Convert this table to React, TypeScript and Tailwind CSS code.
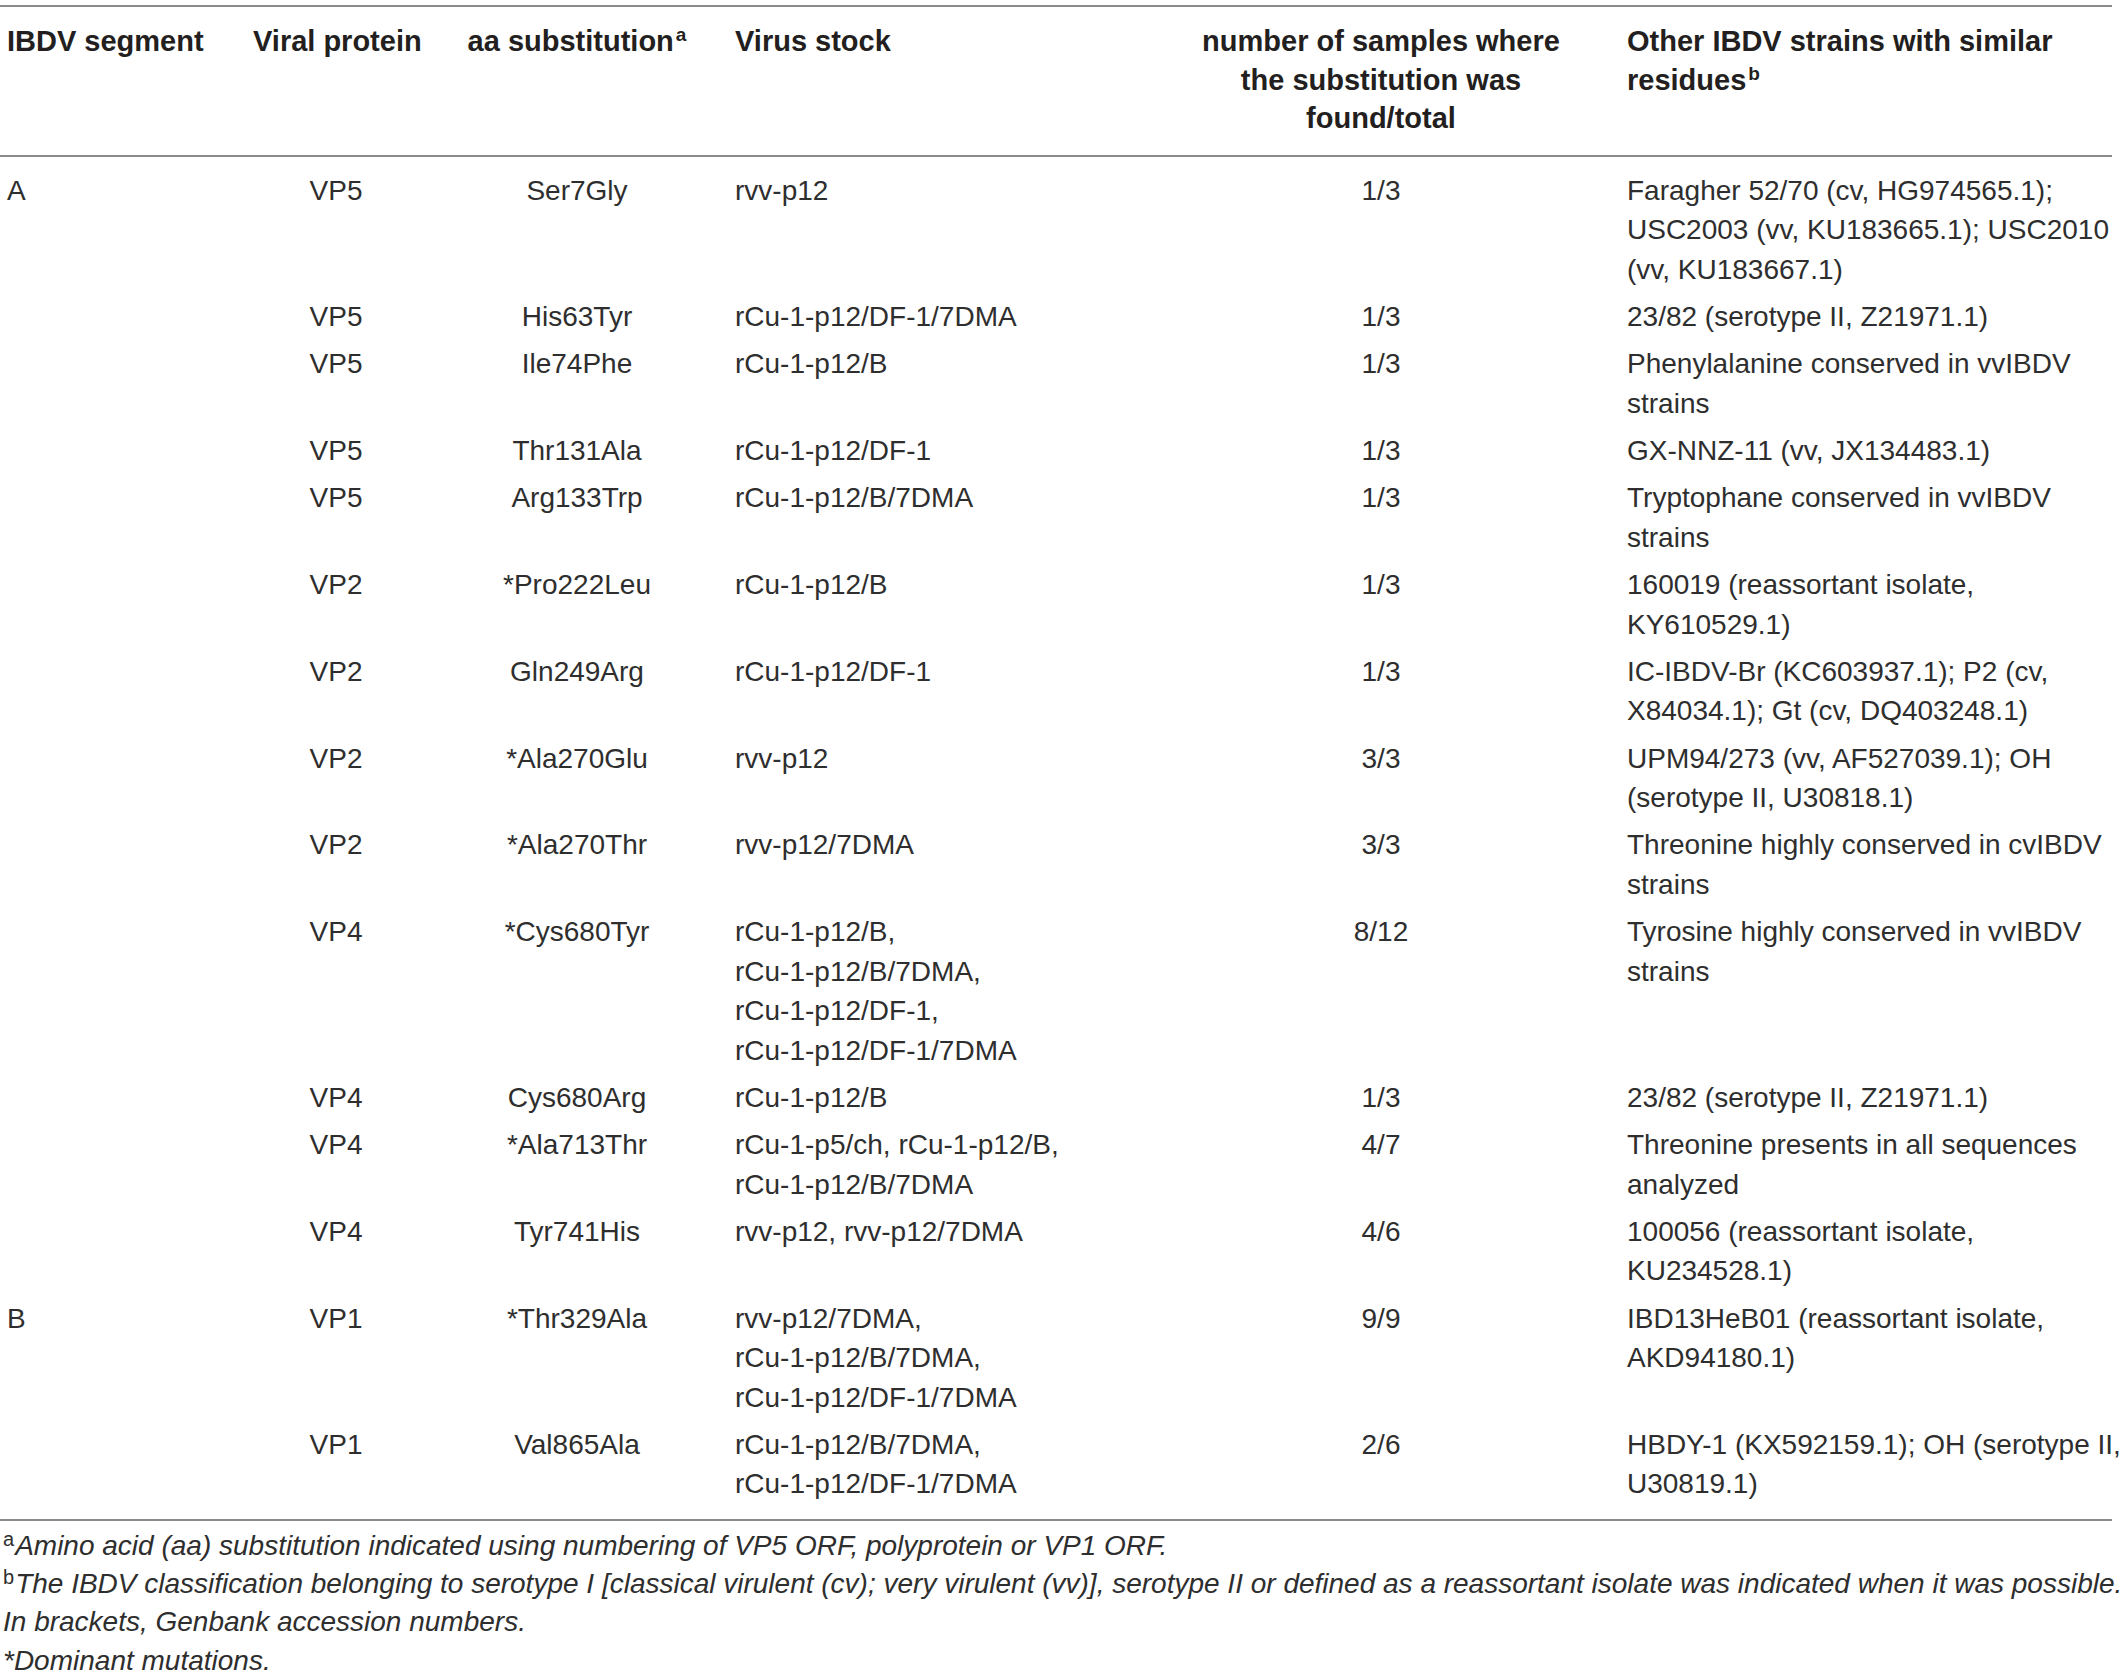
import React from 'react';

type Row = {
  segment?: string;
  protein: string;
  substitution: string;
  stock: string[];
  samples: string;
  others: string[];
};

const rows: Row[] = [
  {
    segment: 'A',
    protein: 'VP5',
    substitution: 'Ser7Gly',
    stock: ['rvv-p12'],
    samples: '1/3',
    others: ['Faragher 52/70 (cv, HG974565.1);', 'USC2003 (vv, KU183665.1); USC2010', '(vv, KU183667.1)'],
  },
  { protein: 'VP5', substitution: 'His63Tyr', stock: ['rCu-1-p12/DF-1/7DMA'], samples: '1/3', others: ['23/82 (serotype II, Z21971.1)'] },
  { protein: 'VP5', substitution: 'Ile74Phe', stock: ['rCu-1-p12/B'], samples: '1/3', others: ['Phenylalanine conserved in vvIBDV', 'strains'] },
  { protein: 'VP5', substitution: 'Thr131Ala', stock: ['rCu-1-p12/DF-1'], samples: '1/3', others: ['GX-NNZ-11 (vv, JX134483.1)'] },
  { protein: 'VP5', substitution: 'Arg133Trp', stock: ['rCu-1-p12/B/7DMA'], samples: '1/3', others: ['Tryptophane conserved in vvIBDV', 'strains'] },
  { protein: 'VP2', substitution: '*Pro222Leu', stock: ['rCu-1-p12/B'], samples: '1/3', others: ['160019 (reassortant isolate,', 'KY610529.1)'] },
  {
    protein: 'VP2',
    substitution: 'Gln249Arg',
    stock: ['rCu-1-p12/DF-1'],
    samples: '1/3',
    others: ['IC-IBDV-Br (KC603937.1); P2 (cv,', 'X84034.1); Gt (cv, DQ403248.1)'],
  },
  {
    protein: 'VP2',
    substitution: '*Ala270Glu',
    stock: ['rvv-p12'],
    samples: '3/3',
    others: ['UPM94/273 (vv, AF527039.1); OH', '(serotype II, U30818.1)'],
  },
  { protein: 'VP2', substitution: '*Ala270Thr', stock: ['rvv-p12/7DMA'], samples: '3/3', others: ['Threonine highly conserved in cvIBDV', 'strains'] },
  {
    protein: 'VP4',
    substitution: '*Cys680Tyr',
    stock: ['rCu-1-p12/B,', 'rCu-1-p12/B/7DMA,', 'rCu-1-p12/DF-1,', 'rCu-1-p12/DF-1/7DMA'],
    samples: '8/12',
    others: ['Tyrosine highly conserved in vvIBDV', 'strains'],
  },
  { protein: 'VP4', substitution: 'Cys680Arg', stock: ['rCu-1-p12/B'], samples: '1/3', others: ['23/82 (serotype II, Z21971.1)'] },
  {
    protein: 'VP4',
    substitution: '*Ala713Thr',
    stock: ['rCu-1-p5/ch, rCu-1-p12/B,', 'rCu-1-p12/B/7DMA'],
    samples: '4/7',
    others: ['Threonine presents in all sequences', 'analyzed'],
  },
  {
    protein: 'VP4',
    substitution: 'Tyr741His',
    stock: ['rvv-p12, rvv-p12/7DMA'],
    samples: '4/6',
    others: ['100056 (reassortant isolate,', 'KU234528.1)'],
  },
  {
    segment: 'B',
    protein: 'VP1',
    substitution: '*Thr329Ala',
    stock: ['rvv-p12/7DMA,', 'rCu-1-p12/B/7DMA,', 'rCu-1-p12/DF-1/7DMA'],
    samples: '9/9',
    others: ['IBD13HeB01 (reassortant isolate,', 'AKD94180.1)'],
  },
  {
    protein: 'VP1',
    substitution: 'Val865Ala',
    stock: ['rCu-1-p12/B/7DMA,', 'rCu-1-p12/DF-1/7DMA'],
    samples: '2/6',
    others: ['HBDY-1 (KX592159.1); OH (serotype II,', 'U30819.1)'],
  },
];

const Lines: React.FC<{ lines: string[] }> = ({ lines }) => (
  <>
    {lines.map((l, i) => (
      <div key={i} className="whitespace-nowrap">
        {l}
      </div>
    ))}
  </>
);

const App: React.FC = () => {
  return (
    <div className="bg-white w-[2123px] min-h-[1677px] pt-[5px] text-[#231f20] font-['Liberation_Sans',Arial,sans-serif]">
      <table className="table-fixed border-collapse w-[2112px] text-left">
        <colgroup>
          <col className="w-[246px]" />
          <col className="w-[180px]" />
          <col className="w-[302px]" />
          <col className="w-[412px]" />
          <col className="w-[482px]" />
          <col className="w-[490px]" />
        </colgroup>
        <thead className="border-t-2 border-b-2 border-[#8a8a8a]">
          <tr className="align-top text-[29px] font-bold leading-[38.5px]">
            <th className="px-[7px] pt-[15px] pb-[17px] whitespace-nowrap font-bold">IBDV segment</th>
            <th className="px-[7px] pt-[15px] pb-[17px] text-center whitespace-nowrap font-bold">Viral protein</th>
            <th className="px-[7px] pt-[15px] pb-[17px] text-center whitespace-nowrap font-bold">
              aa substitution<span className="text-[19px] align-[10px] leading-none ml-[2px]">a</span>
            </th>
            <th className="px-[7px] pt-[15px] pb-[17px] whitespace-nowrap font-bold">Virus stock</th>
            <th className="px-[7px] pt-[15px] pb-[17px] text-center font-bold">
              <Lines lines={['number of samples where', 'the substitution was', 'found/total']} />
            </th>
            <th className="pl-[5px] pr-[7px] pt-[15px] pb-[17px] font-bold">
              <div className="whitespace-nowrap">Other IBDV strains with similar</div>
              <div className="whitespace-nowrap">
                residues<span className="text-[19px] align-[10px] leading-none ml-[2px]">b</span>
              </div>
            </th>
          </tr>
        </thead>
        <tbody className="border-b-2 border-[#8a8a8a] text-[28px] leading-[39.5px] text-[#2e2e2e]">
          {rows.map((r, i) => {
            const first = i === 0;
            const last = i === rows.length - 1;
            const py = first ? 'pt-[14.25px] pb-[3.875px]' : last ? 'pt-[3.875px] pb-[15px]' : 'py-[3.875px]';
            return (
              <tr key={i} className="align-top">
                <td className={`px-[7px] ${py}`}>{r.segment ?? ''}</td>
                <td className={`px-[7px] text-center ${py}`}>{r.protein}</td>
                <td className={`px-[7px] text-center whitespace-nowrap ${py}`}>{r.substitution}</td>
                <td className={`px-[7px] ${py}`}>
                  <Lines lines={r.stock} />
                </td>
                <td className={`px-[7px] text-center ${py}`}>{r.samples}</td>
                <td className={`pl-[5px] pr-[7px] ${py}`}>
                  <Lines lines={r.others} />
                </td>
              </tr>
            );
          })}
        </tbody>
      </table>
      <div className="pt-[6px] pl-[3px] text-[28px] leading-[38.3px] italic text-[#2e2e2e]">
        <div className="whitespace-nowrap">
          <span className="not-italic text-[20px] align-[9px] leading-none mr-[1px]">a</span>
          Amino acid (aa) substitution indicated using numbering of VP5 ORF, polyprotein or VP1 ORF.
        </div>
        <div className="whitespace-nowrap">
          <span className="not-italic text-[20px] align-[9px] leading-none mr-[1px]">b</span>
          The IBDV classification belonging to serotype I [classical virulent (cv); very virulent (vv)], serotype II or
          defined as a reassortant isolate was indicated when it was possible.
        </div>
        <div className="whitespace-nowrap">In brackets, Genbank accession numbers.</div>
        <div className="whitespace-nowrap">*Dominant mutations.</div>
      </div>
    </div>
  );
};

export default App;
